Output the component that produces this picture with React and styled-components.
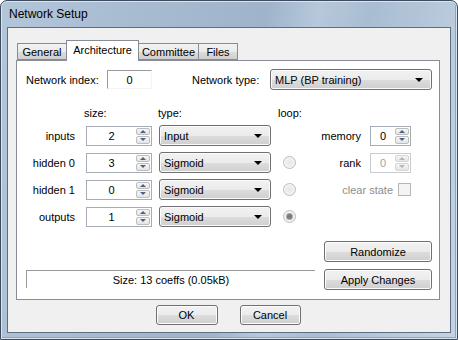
import React from "react";
import styled, { createGlobalStyle } from "styled-components";

const GlobalStyle = createGlobalStyle`
  html, body {
    margin: 0;
    padding: 0;
    background: #ffffff;
  }
  body {
    font-family: "Liberation Sans", Arial, sans-serif;
    font-size: 11px;
    color: #000;
  }
  * { box-sizing: border-box; }
`;

const Window = styled.div`
  width: 458px;
  height: 340px;
  border: 1px solid #3e4c5e;
  border-radius: 7px 7px 0 0;
  padding: 0 6px 6px 6px;
  display: flex;
  flex-direction: column;
  background: linear-gradient(100deg, #b3c5d9 0%, #a6bad0 30%, #9fb4cb 52%, #b6c8db 62%, #a9bdd2 72%, #c4d4e4 100%);
  box-shadow: inset 0 0 0 1px #d9e4ef, inset -1px -1px 0 1px #3ec5e8;
`;

const TitleBar = styled.div`
  height: 26px;
  display: flex;
  align-items: center;
  padding-left: 2px;
  font-size: 12px;
  color: #000;
`;

const Client = styled.div`
  flex: 1;
  background: #f0f0f0;
  border: 1px solid #5e6d7f;
  padding: 12px 10px 0 8px;
  display: flex;
  flex-direction: column;
`;

const TabStrip = styled.div`
  display: flex;
  align-items: flex-end;
  height: 21px;
  padding-left: 1px;
  margin-bottom: -1px;
`;

const Tab = styled.div`
  width: ${(p) => p.$w}px;
  height: ${(p) => (p.$active ? 21 : 17)}px;
  margin-bottom: ${(p) => (p.$active ? 0 : 1)}px;
  margin-left: ${(p) => (p.$first ? 0 : -1)}px;
  border: 1px solid #898c95;
  border-bottom: ${(p) => (p.$active ? "none" : "1px solid #898c95")};
  background: ${(p) =>
    p.$active ? "#ffffff" : "linear-gradient(#f2f2f2 0%, #ebebeb 50%, #dddddd 51%, #cfcfcf 100%)"};
  display: flex;
  align-items: ${(p) => (p.$active ? "flex-start" : "center")};
  justify-content: center;
  padding-top: ${(p) => (p.$active ? 3 : 0)}px;
  position: relative;
  z-index: ${(p) => (p.$active ? 2 : 1)};
  font-size: 11px;
`;

const Pane = styled.div`
  height: 240px;
  border: 1px solid #898c95;
  background: #ffffff;
  display: flex;
  flex-direction: column;
  padding-top: 8px;
`;

const Row = styled.div`
  display: flex;
  align-items: center;
  height: 21px;
  margin-top: ${(p) => p.$mt || 0}px;
`;

const Label = styled.span`
  width: ${(p) => p.$w}px;
  margin-left: ${(p) => p.$ml || 0}px;
  text-align: ${(p) => p.$align || "left"};
  color: ${(p) => (p.$disabled ? "#8d8d8d" : "#000")};
  white-space: nowrap;
`;

const Edit = styled.div`
  width: 45px;
  height: 19px;
  border-top: 1px solid #9a9a9a;
  border-left: 1px solid #9a9a9a;
  border-right: 1px solid #f4f4f4;
  border-bottom: 1px solid #f4f4f4;
  display: flex;
  align-items: center;
  justify-content: center;
  background: #fff;
`;

const Combo = styled.div`
  width: ${(p) => p.$w}px;
  height: 21px;
  margin-left: ${(p) => p.$ml || 0}px;
  border: 1px solid #707070;
  border-radius: 3px;
  background: linear-gradient(#f2f2f2 0%, #ebebeb 50%, #dddddd 51%, #cfcfcf 100%);
  box-shadow: inset 0 0 0 1px #fbfbfb;
  display: flex;
  align-items: center;
  padding: 0 8px 0 4px;
  justify-content: space-between;
`;

const Caret = styled.span`
  width: 0;
  height: 0;
  border-left: 4px solid transparent;
  border-right: 4px solid transparent;
  border-top: 4px solid #000;
`;

const HeaderRow = styled.div`
  display: flex;
  align-items: center;
  height: 14px;
  margin-top: 16px;
  padding-left: 67px;
`;

const HeaderCell = styled.span`
  width: ${(p) => p.$w}px;
`;

const Layers = styled.div`
  display: flex;
  flex-direction: column;
  gap: 6px;
  margin-top: 5px;
`;

const Spin = styled.div`
  width: ${(p) => p.$w}px;
  height: 20px;
  margin-left: ${(p) => p.$ml || 0}px;
  border: 1px solid ${(p) => (p.$disabled ? "#c9cbce" : "#a5acb5")};
  background: #fff;
  display: flex;
  color: ${(p) => (p.$disabled ? "#a3a3a3" : "#000")};
`;

const SpinValue = styled.div`
  flex: 1;
  display: flex;
  align-items: center;
  justify-content: center;
`;

const SpinArrows = styled.div`
  width: 15px;
  display: flex;
  flex-direction: column;
  padding: 1px 1px 1px 0;
  gap: 1px;
`;

const SpinBtn = styled.div`
  flex: 1;
  border: 1px solid ${(p) => (p.$disabled ? "#d6d6d6" : "#bdbdbd")};
  border-radius: 2px;
  background: linear-gradient(#f6f6f6, #e4e4e4);
  display: flex;
  align-items: center;
  justify-content: center;
`;

const Tri = styled.span`
  width: 0;
  height: 0;
  border-left: 3px solid transparent;
  border-right: 3px solid transparent;
  ${(p) =>
    p.$up
      ? `border-bottom: 3px solid ${p.$disabled ? "#b5b5b5" : "#4d6185"};`
      : `border-top: 3px solid ${p.$disabled ? "#b5b5b5" : "#4d6185"};`}
`;

const RadioCell = styled.div`
  width: 36px;
  display: flex;
  justify-content: center;
`;

const Radio = styled.span`
  width: 13px;
  height: 13px;
  border-radius: 50%;
  border: 1px solid #bcbcbc;
  background: radial-gradient(circle, #e6e6e6 0%, #f4f4f4 70%);
  display: flex;
  align-items: center;
  justify-content: center;
  &::after {
    content: "";
    display: ${(p) => (p.$checked ? "block" : "none")};
    width: 5px;
    height: 5px;
    border-radius: 50%;
    background: #7c7c7c;
    box-shadow: 0 0 0 1px #a9a9a9;
  }
`;

const SideCell = styled.div`
  width: 104px;
  display: flex;
  align-items: center;
  justify-content: flex-end;
  gap: ${(p) => p.$gap || 9}px;
`;

const Check = styled.span`
  width: 13px;
  height: 13px;
  border: 1px solid #b6b6b6;
  background: #f4f4f4;
`;

const Bottom = styled.div`
  display: flex;
  align-items: flex-end;
  margin-top: 14px;
`;

const Status = styled.div`
  width: 289px;
  height: 18px;
  margin-left: 9px;
  margin-bottom: 2px;
  border-top: 1px solid #9a9a9a;
  border-left: 1px solid #9a9a9a;
  display: flex;
  align-items: center;
  justify-content: center;
`;

const ButtonCol = styled.div`
  display: flex;
  flex-direction: column;
  gap: 7px;
  margin-left: 9px;
`;

const Button = styled.div`
  width: ${(p) => p.$w}px;
  height: ${(p) => p.$h || 21}px;
  border: 1px solid #707070;
  border-radius: 3px;
  background: linear-gradient(#f2f2f2 0%, #ebebeb 50%, #dddddd 51%, #cfcfcf 100%);
  box-shadow: inset 0 0 0 1px #fcfcfc;
  display: flex;
  align-items: center;
  justify-content: center;
`;

const DialogButtons = styled.div`
  display: flex;
  justify-content: center;
  gap: 22px;
  margin-top: 5px;
`;

const layers = [
  { name: "inputs", size: 2, type: "Input", radio: null },
  { name: "hidden 0", size: 3, type: "Sigmoid", radio: false },
  { name: "hidden 1", size: 0, type: "Sigmoid", radio: false },
  { name: "outputs", size: 1, type: "Sigmoid", radio: true },
];

const SpinBox = ({ value, w, ml, disabled }) => (
  <Spin $w={w} $ml={ml} $disabled={disabled}>
    <SpinValue>{value}</SpinValue>
    <SpinArrows>
      <SpinBtn $disabled={disabled}><Tri $up $disabled={disabled} /></SpinBtn>
      <SpinBtn $disabled={disabled}><Tri $disabled={disabled} /></SpinBtn>
    </SpinArrows>
  </Spin>
);

const Side = ({ index }) => {
  if (index === 0)
    return (
      <SideCell>
        <Label>memory</Label>
        <SpinBox value={0} w={41} />
      </SideCell>
    );
  if (index === 1)
    return (
      <SideCell>
        <Label>rank</Label>
        <SpinBox value={0} w={41} disabled />
      </SideCell>
    );
  if (index === 2)
    return (
      <SideCell $gap={5}>
        <Label $disabled>clear state</Label>
        <Check />
      </SideCell>
    );
  return null;
};

export default function App() {
  return (
    <>
      <GlobalStyle />
      <Window>
        <TitleBar>Network Setup</TitleBar>
        <Client>
          <TabStrip>
            <Tab $w={50} $first>General</Tab>
            <Tab $w={73} $active>Architecture</Tab>
            <Tab $w={61}>Committee</Tab>
            <Tab $w={40}>Files</Tab>
          </TabStrip>
          <Pane>
            <Row>
              <Label $w={81} $ml={9}>Network index:</Label>
              <Edit>0</Edit>
              <Label $w={78} $ml={40}>Network type:</Label>
              <Combo $w={162}>
                MLP (BP training)
                <Caret />
              </Combo>
            </Row>
            <HeaderRow>
              <HeaderCell $w={74}>size:</HeaderCell>
              <HeaderCell $w={120}>type:</HeaderCell>
              <HeaderCell $w={40}>loop:</HeaderCell>
            </HeaderRow>
            <Layers>
              {layers.map((l, i) => (
                <Row key={l.name}>
                  <Label $w={58} $align="right">{l.name}</Label>
                  <SpinBox value={l.size} w={66} ml={11} />
                  <Combo $w={112} $ml={7}>
                    {l.type}
                    <Caret />
                  </Combo>
                  <RadioCell>
                    {l.radio !== null && <Radio $checked={l.radio} />}
                  </RadioCell>
                  <Side index={i} />
                </Row>
              ))}
            </Layers>
            <Bottom>
              <Status>Size: 13 coeffs (0.05kB)</Status>
              <ButtonCol>
                <Button $w={108}>Randomize</Button>
                <Button $w={108}>Apply Changes</Button>
              </ButtonCol>
            </Bottom>
          </Pane>
          <DialogButtons>
            <Button $w={62} $h={20}>OK</Button>
            <Button $w={61} $h={20}>Cancel</Button>
          </DialogButtons>
        </Client>
      </Window>
    </>
  );
}
